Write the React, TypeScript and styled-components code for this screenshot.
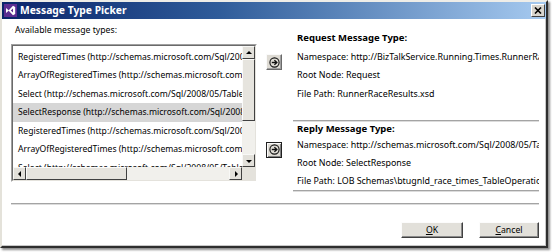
import React from 'react';
import styled, { createGlobalStyle } from 'styled-components';

const GlobalStyle = createGlobalStyle`
  html, body { margin: 0; padding: 0; background: #ffffff; }
  body {
    width: 554px; height: 252px; overflow: hidden;
    font-family: "Noto Sans", "Open Sans", sans-serif; color: #000;
  }
  * { box-sizing: border-box; }
`;

const Window = styled.div`
  width: 548px;
  height: 248px;
  display: flex;
  flex-direction: column;
  background: #fff;
  border-top: 2px solid #eeede8;
  border-left: 2px solid #e4e2da;
  border-right: 2px solid #2e2e2e;
  border-bottom: 2px solid #2e2e2e;
  box-shadow: inset -1px -1px 0 #c8c8c8, 2px 2px 2px rgba(0, 0, 0, 0.45);
`;

const TitleBar = styled.div`
  height: 17px;
  flex: none;
  display: flex;
  align-items: center;
  padding: 0 1px 0 2px;
  background: linear-gradient(90deg, #0a246a 0%, #2f5c9a 40%, #a6caf0 100%);
`;

const TitleText = styled.span`
  margin-left: 3px;
  color: #fff;
  font-weight: 700;
  font-size: 10.3px;
  line-height: 17px;
  white-space: nowrap;
`;

const CloseButton = styled.div`
  margin-left: auto;
  width: 14px;
  height: 13px;
  display: flex;
  align-items: center;
  justify-content: center;
  background: #d8d5ce;
  border: 1px solid;
  border-color: #fff #404040 #404040 #fff;
`;

const Body = styled.div`
  flex: 1;
  display: flex;
  flex-direction: column;
  padding: 0 7px 0 9px;
`;

const TopRow = styled.div`
  display: flex;
  align-items: flex-start;
`;

const LeftCol = styled.div`
  width: 246px;
  flex: none;
`;

const Label = styled.div`
  font-size: 8.7px;
  line-height: 14px;
  margin: 4px 0 7px 4px;
  white-space: nowrap;
`;

const ListOuter = styled.div`
  height: 138px;
  border: 1px solid;
  border-color: #a0a0a0 #ffffff #ffffff #a0a0a0;
`;

const ListInner = styled.div`
  height: 100%;
  border: 1px solid;
  border-color: #6a6a6a #e4e2dc #e4e2dc #6a6a6a;
  display: grid;
  grid-template-columns: 1fr 13px;
  grid-template-rows: 1fr 13px;
  background: #fff;
`;

const Items = styled.div`
  overflow: hidden;
  padding-top: 1.5px;
  min-width: 0;
`;

const Item = styled.div<{ $selected?: boolean }>`
  height: 18.5px;
  line-height: 18.5px;
  padding-left: 5px;
  font-size: 8.6px;
  white-space: nowrap;
  overflow: hidden;
  background: ${(p) => (p.$selected ? '#d6d6d6' : 'transparent')};
`;

const VScroll = styled.div`
  display: flex;
  flex-direction: column;
  background: #f1f0ec;
`;

const HScroll = styled.div`
  display: flex;
  background: #f1f0ec;
  min-width: 0;
`;

const ScrollButton = styled.div`
  width: 13px;
  height: 13px;
  flex: none;
  display: flex;
  align-items: center;
  justify-content: center;
  background: #e2e0da;
  border: 1px solid;
  border-color: #f8f8f6 #404040 #404040 #f8f8f6;
`;

const Thumb = styled.div<{ $length: number; $vertical?: boolean }>`
  flex: none;
  ${(p) => (p.$vertical ? `height: ${p.$length}px;` : `width: ${p.$length}px;`)}
  background: #e6e4de;
  border: 1px solid;
  border-color: #fbfbfa #404040 #404040 #fbfbfa;
`;

const Track = styled.div`
  flex: 1;
`;

const Corner = styled.div`
  background: #e4e2dc;
`;

const RightArea = styled.div`
  flex: 1;
  min-width: 0;
  display: flex;
  flex-direction: column;
`;

const Section = styled.div`
  display: flex;
  align-items: flex-start;
`;

const ArrowButton = styled.div<{ $top: number; $default?: boolean }>`
  margin: ${(p) => p.$top}px 0 0 9px;
  width: 16px;
  height: 16px;
  flex: none;
  display: flex;
  align-items: center;
  justify-content: center;
  background: #dedbd4;
  border: 1px solid;
  border-color: ${(p) => (p.$default ? '#202020' : '#fafafa #6a6a6a #6a6a6a #fafafa')};
  box-shadow: ${(p) =>
    p.$default ? 'inset 1px 1px 0 #fafafa, inset -1px -1px 0 #808080' : 'inset -1px -1px 0 #a0a0a0'};
`;

const Info = styled.div<{ $top: number; $line: number }>`
  flex: 1;
  min-width: 0;
  overflow: hidden;
  margin-left: 15px;
  padding-top: ${(p) => p.$top}px;
  & > p {
    margin: 0;
    font-size: 8.9px;
    line-height: ${(p) => p.$line}px;
    white-space: nowrap;
  }
`;

const Header = styled.div<{ $gap: number }>`
  font-weight: 700;
  font-size: 9.5px;
  line-height: 14px;
  margin-bottom: ${(p) => p.$gap}px;
  white-space: nowrap;
`;

const Separator = styled.div<{ $indent?: number; $top?: number }>`
  height: 2px;
  flex: none;
  margin-left: ${(p) => p.$indent ?? 0}px;
  margin-top: ${(p) => p.$top ?? 0}px;
  border-top: 1px solid #a4a4a4;
  border-bottom: 1px solid #dcdcdc;
`;

const ButtonRow = styled.div`
  display: flex;
  justify-content: flex-end;
  gap: 16px;
  margin-top: 17px;
`;

const DialogButton = styled.div<{ $width: number }>`
  width: ${(p) => p.$width}px;
  height: 16px;
  display: flex;
  align-items: center;
  justify-content: center;
  font-size: 8.7px;
  background: #e2e0da;
  border: 1px solid;
  border-color: #fcfcfc #404040 #404040 #fcfcfc;
  box-shadow: inset -1px -1px 0 #8a8a8a;
`;

const U = styled.span`
  text-decoration: underline;
`;

const Tri = ({ dir }: { dir: 'up' | 'down' | 'left' | 'right' }) => {
  const pts = {
    up: '1,5 4,2 7,5',
    down: '1,3 4,6 7,3',
    left: '5,1 2,4 5,7',
    right: '3,1 6,4 3,7',
  }[dir];
  return (
    <svg width="8" height="8" viewBox="0 0 8 8">
      <polygon points={pts} fill="#000" />
    </svg>
  );
};

const CircleArrow = () => (
  <svg width="11" height="11" viewBox="0 0 11 11">
    <circle cx="5.5" cy="5.5" r="4.6" fill="none" stroke="#111" strokeWidth="1.1" />
    <path d="M2.8 5.5 H7.6" stroke="#111" strokeWidth="1.4" />
    <path d="M5.4 3.2 L7.8 5.5 L5.4 7.8" fill="none" stroke="#111" strokeWidth="1.4" />
  </svg>
);

const VsIcon = () => (
  <svg width="13" height="13" viewBox="0 0 13 13">
    <rect x="0" y="0" width="13" height="13" fill="#5c2d91" />
    <path d="M2 4 L5 6.5 L2 9 Z" fill="#fff" />
    <path d="M9 1.8 L11.2 3 L11.2 10 L9 11.2 L4.5 6.5 Z M9 4.4 L6.8 6.5 L9 8.6 Z" fill="#fff" fillRule="evenodd" />
  </svg>
);

const items = [
  'RegisteredTimes (http://schemas.microsoft.com/Sql/2008/05/TableOp/dbo/RegisteredTimes)',
  'ArrayOfRegisteredTimes (http://schemas.microsoft.com/Sql/2008/05/Types/Tables/dbo)',
  'Select (http://schemas.microsoft.com/Sql/2008/05/TableOp/dbo/RegisteredTimes)',
  'SelectResponse (http://schemas.microsoft.com/Sql/2008/05/TableOp/dbo/RegisteredTimes)',
  'RegisteredTimes (http://schemas.microsoft.com/Sql/2008/05/Types/Tables/dbo)',
  'ArrayOfRegisteredTimes (http://schemas.microsoft.com/Sql/2008/05/TableOp/dbo)',
  'Select (http://schemas.microsoft.com/Sql/2008/05/TableOp/dbo/RegisteredTimes)',
];

export default function App() {
  return (
    <>
      <GlobalStyle />
      <Window>
        <TitleBar>
          <VsIcon />
          <TitleText>Message Type Picker</TitleText>
          <CloseButton>
            <svg width="8" height="7" viewBox="0 0 8 7">
              <path d="M1 0.5 L7 6.5 M7 0.5 L1 6.5" stroke="#000" strokeWidth="1.6" />
            </svg>
          </CloseButton>
        </TitleBar>
        <Body>
          <TopRow>
            <LeftCol>
              <Label>Available message types:</Label>
              <ListOuter>
                <ListInner>
                  <Items>
                    {items.map((t, i) => (
                      <Item key={i} $selected={i === 3}>
                        {t}
                      </Item>
                    ))}
                  </Items>
                  <VScroll>
                    <ScrollButton>
                      <Tri dir="up" />
                    </ScrollButton>
                    <Thumb $vertical $length={62} />
                    <Track />
                    <ScrollButton>
                      <Tri dir="down" />
                    </ScrollButton>
                  </VScroll>
                  <HScroll>
                    <ScrollButton>
                      <Tri dir="left" />
                    </ScrollButton>
                    <Thumb $length={101} />
                    <Track />
                    <ScrollButton>
                      <Tri dir="right" />
                    </ScrollButton>
                  </HScroll>
                  <Corner />
                </ListInner>
              </ListOuter>
            </LeftCol>
            <RightArea>
              <Section>
                <ArrowButton $top={35}>
                  <CircleArrow />
                </ArrowButton>
                <Info $top={11.5} $line={18.6}>
                  <Header $gap={3}>Request Message Type:</Header>
                  <p>Namespace: http://BizTalkService.Running.Times.RunnerRaceResults</p>
                  <p>Root Node: Request</p>
                  <p>File Path: RunnerRaceResults.xsd</p>
                </Info>
              </Section>
              <Separator $indent={36} $top={16.5} />
              <Section>
                <ArrowButton $top={20} $default>
                  <CircleArrow />
                </ArrowButton>
                <Info $top={0} $line={18}>
                  <Header $gap={0}>Reply Message Type:</Header>
                  <p>Namespace: http://schemas.microsoft.com/Sql/2008/05/TableOp/dbo</p>
                  <p>Root Node: SelectResponse</p>
                  <p>File Path: LOB Schemas\btugnld_race_times_TableOperation.dbo.xsd</p>
                </Info>
              </Section>
              <Separator $indent={36} />
            </RightArea>
          </TopRow>
          <Separator $top={11} />
          <ButtonRow>
            <DialogButton $width={62}>
              <span>
                <U>O</U>K
              </span>
            </DialogButton>
            <DialogButton $width={60}>
              <span>
                <U>C</U>ancel
              </span>
            </DialogButton>
          </ButtonRow>
        </Body>
      </Window>
    </>
  );
}
